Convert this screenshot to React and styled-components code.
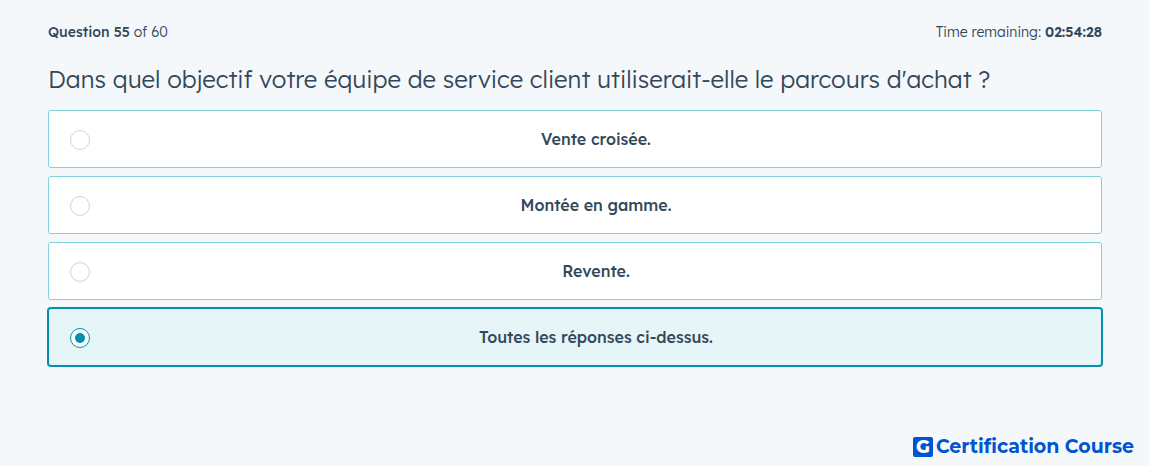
import React, { useState } from "react";
import styled, { createGlobalStyle } from "styled-components";

const question = {
  number: 55,
  total: 60,
  timeLeft: "02:54:28",
  title:
    "Dans quel objectif votre équipe de service client utiliserait-elle le parcours d'achat ?",
  answers: [
    "Vente croisée.",
    "Montée en gamme.",
    "Revente.",
    "Toutes les réponses ci-dessus.",
  ],
};

export default function App() {
  const [selected, setSelected] = useState(3);

  return (
    <>
      <GlobalStyle />
      <Page>
        <Header>
          <Progress>
            <strong>Question {question.number}</strong> of {question.total}
          </Progress>
          <Timer>
            Time remaining: <strong>{question.timeLeft}</strong>
          </Timer>
        </Header>
        <Answers>
          <Title>{question.title}</Title>
          {question.answers.map((answer, index) => (
            <Answer key={answer} $selected={selected === index}>
              <Radio
                type="radio"
                name="answer"
                checked={selected === index}
                onChange={() => setSelected(index)}
              />
              <AnswerText>{answer}</AnswerText>
            </Answer>
          ))}
        </Answers>
      </Page>
      <Footer>
        <LogoMark>G</LogoMark>
        <LogoText>Certification Course</LogoText>
      </Footer>
    </>
  );
}

const GlobalStyle = createGlobalStyle`
  * {
    box-sizing: border-box;
  }
  body {
    margin: 0;
    background: #f5f8fa;
    color: #33475b;
    font-family: "Lexend Deca", Lexend, Inter, sans-serif;
  }
  #root {
    min-height: 100vh;
    display: flex;
    flex-direction: column;
  }
`;

const Page = styled.main`
  flex: 1;
  padding: 20px 48px;
`;

const Header = styled.header`
  display: flex;
  justify-content: space-between;
  font-size: 14px;
  font-weight: 300;
  line-height: 24px;
`;

const Progress = styled.span`
  strong {
    font-weight: 500;
  }
`;

const Timer = styled.span`
  strong {
    font-weight: 600;
  }
`;

const Answers = styled.fieldset`
  display: flex;
  flex-direction: column;
  gap: 8px;
  min-width: 0;
  margin: 0;
  padding: 0;
  border: 0;
`;

const Title = styled.legend`
  padding: 19px 0 15px;
  font-size: 24px;
  font-weight: 300;
  line-height: 32px;
`;

const Answer = styled.label`
  display: flex;
  align-items: center;
  gap: 1px;
  padding: 16px 0 16px 21px;
  border: 1px solid ${(props) => (props.$selected ? "#0091ae" : "#7fd1de")};
  border-radius: 3px;
  background: ${(props) => (props.$selected ? "#e5f5f8" : "#ffffff")};
  box-shadow: ${(props) => (props.$selected ? "0 0 0 1px #0091ae" : "none")};
  cursor: pointer;
`;

const Radio = styled.input`
  appearance: none;
  flex: none;
  display: grid;
  place-items: center;
  width: 20px;
  height: 20px;
  margin: 2px 0 0;
  border: 1px solid #cbd6e2;
  border-radius: 50%;
  background: #ffffff;
  cursor: pointer;
  &:checked {
    border-color: #0091ae;
  }
  &:checked::before {
    content: "";
    width: 10px;
    height: 10px;
    border-radius: 50%;
    background: #0091ae;
  }
`;

const AnswerText = styled.span`
  flex: 1;
  font-size: 16px;
  font-weight: 500;
  line-height: 24px;
  text-align: center;
`;

const Footer = styled.footer`
  display: flex;
  justify-content: flex-end;
  align-items: center;
  gap: 3px;
  padding: 0 16px 8px;
  color: #0054d1;
  font-family: Montserrat, "Lexend Deca", Inter, sans-serif;
`;

const LogoMark = styled.span`
  width: 20px;
  height: 20px;
  border-radius: 2px;
  background: #0054d1;
  color: #ffffff;
  font-size: 18px;
  font-weight: 800;
  line-height: 20px;
  text-align: center;
`;

const LogoText = styled.span`
  font-size: 19px;
  font-weight: 700;
  line-height: 22px;
`;
